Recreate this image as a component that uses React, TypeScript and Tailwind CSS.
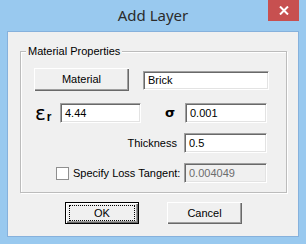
import * as React from "react";

const font = { fontFamily: '"Liberation Sans", Arial, sans-serif' };

function Field({ value, className = "", disabled = false }: { value: string; className?: string; disabled?: boolean }) {
  return (
    <div
      className={`flex items-center border border-t-[#a0a0a0] border-l-[#a0a0a0] border-r-[#ffffff] border-b-[#ffffff] shadow-[inset_1px_1px_0_#696969,inset_-1px_-1px_0_#e3e3e3] pl-[4px] text-[11px] ${
        disabled ? "bg-[#f0f0f0] text-[#6d6d6d]" : "bg-white text-black"
      } ${className}`}
    >
      {value}
    </div>
  );
}

function Btn({ label, focused = false, className = "" }: { label: string; focused?: boolean; className?: string }) {
  return (
    <div
      className={`flex items-center justify-center bg-[#f0f0f0] text-[11px] text-black ${
        focused
          ? "border border-black shadow-[inset_1px_1px_0_#ffffff,inset_-1px_-1px_0_#696969,inset_-2px_-2px_0_#a0a0a0]"
          : "shadow-[inset_1px_1px_0_#ffffff,inset_-1px_-1px_0_#696969,inset_-2px_-2px_0_#a0a0a0]"
      } ${className}`}
    >
      {focused ? (
        <div className="flex h-[16px] w-[66px] items-center justify-center border border-dotted border-black">{label}</div>
      ) : (
        label
      )}
    </div>
  );
}

export default function App() {
  return (
    <div className="h-[244px] w-[306px] bg-[#99c9ef] text-black" style={font}>
      {/* title bar */}
      <div className="relative h-[31px]">
        <div
          className="pt-[4px] text-center text-[15px] text-[#2b2b2b]"
          style={{ fontFamily: '"Noto Sans", "Open Sans", sans-serif' }}
        >
          Add Layer
        </div>
        <div className="absolute right-[7px] top-0 flex h-[21px] w-[31px] items-center justify-center bg-[#c75050]">
          <svg width="10" height="9" viewBox="0 0 10 9">
            <path d="M1 0.5 L9 8.5 M9 0.5 L1 8.5" stroke="#fff" strokeWidth="2" />
          </svg>
        </div>
      </div>

      {/* client area */}
      <div className="mx-[7px] h-[206px] w-[292px] border border-[#86b1dc] bg-[#f0f0f0] pt-[19px]">
        {/* group box */}
        <div className="relative ml-[12px] h-[142px] w-[267px] border border-[#bcbcbc] shadow-[inset_1px_1px_0_#ffffff,1px_1px_0_#ffffff]">
          <span className="absolute left-[5px] top-[-8px] bg-[#f0f0f0] px-[2px] text-[11px] leading-[14px]">
            Material Properties
          </span>

          <div className="flex items-start pt-[16px]">
            <Btn label="Material" className="ml-[13px] h-[23px] w-[95px]" />
            <Field value="Brick" className="ml-[14px] mt-[3px] h-[19px] w-[126px]" />
          </div>

          <div className="mt-[12px] flex h-[20px] items-center">
            <div className="ml-[14px] flex w-[25px] items-end">
              <span className="text-[20px] leading-[20px]" style={{ fontFamily: '"DejaVu Sans", sans-serif' }}>
                ε
              </span>
              <span className="ml-[1px] text-[12px] font-bold leading-[12px]">r</span>
            </div>
            <Field value="4.44" className="h-[20px] w-[81px]" />
            <div className="flex w-[44px] justify-end pr-[10px]">
              <span className="text-[13px] font-bold leading-[16px]" style={{ fontFamily: '"DejaVu Sans", sans-serif' }}>
                σ
              </span>
            </div>
            <Field value="0.001" className="h-[20px] w-[82px]" />
          </div>

          <div className="mt-[10px] flex h-[20px] items-center">
            <div className="w-[156px] text-right text-[11px]">Thickness</div>
            <Field value="0.5" className="ml-[7px] h-[20px] w-[83px]" />
          </div>

          <div className="mt-[10px] flex h-[20px] items-center">
            <div className="ml-[35px] h-[13px] w-[13px] border border-[#8f8f8f] bg-white" />
            <div className="ml-[4px] w-[111px] text-[11px]">Specify Loss Tangent:</div>
            <Field value="0.004049" disabled className="h-[20px] w-[83px]" />
          </div>
        </div>

        {/* buttons */}
        <div className="mt-[9px] flex">
          <Btn label="OK" focused className="ml-[57px] h-[22px] w-[74px]" />
          <Btn label="Cancel" className="ml-[28px] h-[22px] w-[75px]" />
        </div>
      </div>
    </div>
  );
}
